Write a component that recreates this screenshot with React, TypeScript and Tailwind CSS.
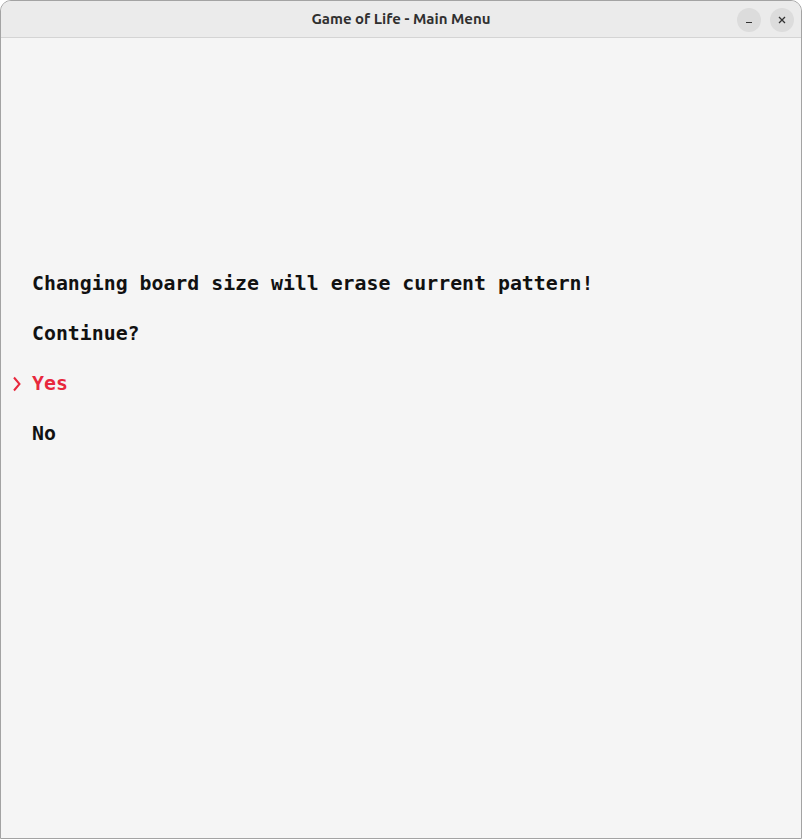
export default function App() {
  return (
    <div className="w-[802px] h-[839px] bg-[#f5f5f5] flex flex-col rounded-t-[11px] border border-[#a3a3a3] overflow-hidden">
      {/* Title bar */}
      <div className="h-[37px] bg-[#ebebeb] border-b border-[#d4d4d4] flex items-center relative shrink-0">
        <div
          className="flex-1 text-center text-[15px] font-bold text-[#303030]"
          style={{ fontFamily: 'Ubuntu, "Noto Sans", sans-serif' }}
        >
          Game of Life - Main Menu
        </div>
        <div className="absolute right-[7px] top-[7px] flex gap-[9px]">
          <button className="w-[24px] h-[24px] rounded-full bg-[#dcdcdc] flex items-center justify-center">
            <svg width="10" height="10" viewBox="0 0 10 10">
              <path d="M2 7.5h6" stroke="#333" strokeWidth="1.2" />
            </svg>
          </button>
          <button className="w-[24px] h-[24px] rounded-full bg-[#dcdcdc] flex items-center justify-center">
            <svg width="10" height="10" viewBox="0 0 10 10">
              <path d="M2 2l6 6M8 2l-6 6" stroke="#333" strokeWidth="1.3" />
            </svg>
          </button>
        </div>
      </div>

      {/* Dialog */}
      <div
        className="flex flex-col pt-[221px] pl-[31px] text-[19.85px] font-bold leading-[50px] text-[#111]"
        style={{ fontFamily: '"DejaVu Sans Mono", "Liberation Mono", monospace' }}
      >
        <div>Changing board size will erase current pattern!</div>
        <div>Continue?</div>
        <div className="relative flex items-center text-[#e8283d]">
          <svg
            className="absolute -left-[20px]"
            width="10"
            height="16"
            viewBox="0 0 10 16"
          >
            <path d="M2 1.5l5.5 6.5L2 14.5" fill="none" stroke="#e8283d" strokeWidth="2" />
          </svg>
          Yes
        </div>
        <div>No</div>
      </div>
    </div>
  );
}
